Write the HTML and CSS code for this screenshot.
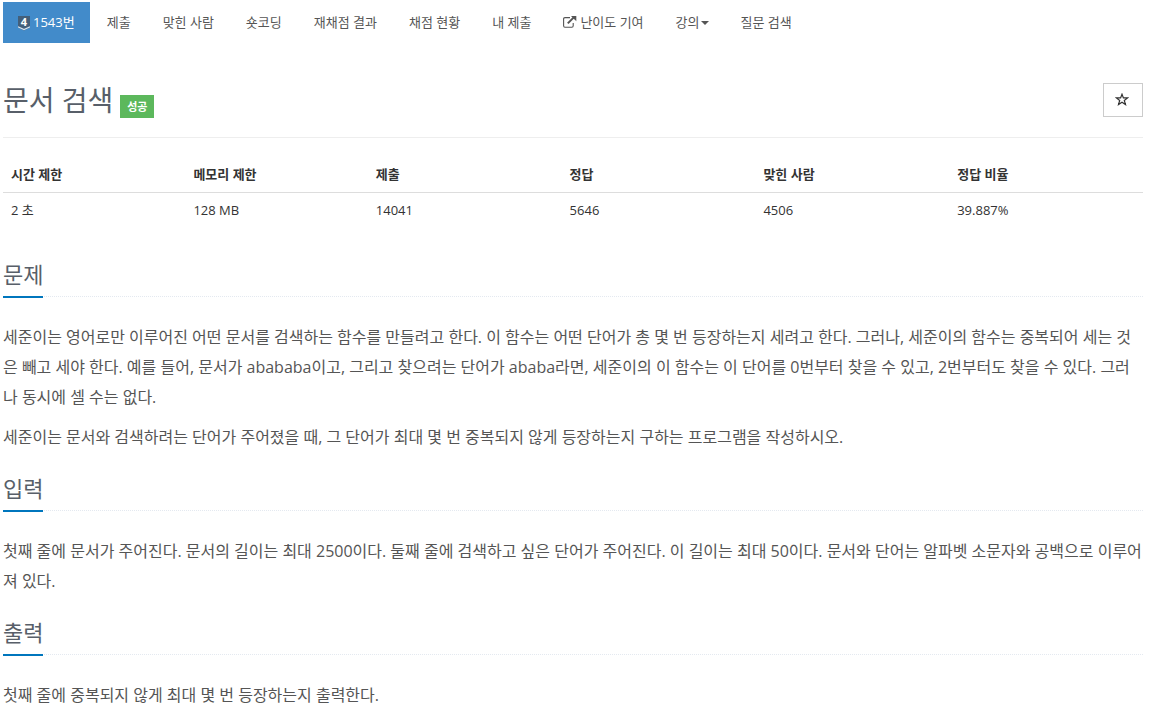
FILE: index.html
```html
<!DOCTYPE html>
<html lang="ko">
<head>
    <meta charset="UTF-8">
    <meta name="viewport" content="width=device-width, initial-scale=1.0">
    <title>1543번: 문서 검색</title>
    <link rel="stylesheet" href="styles.css">
</head>
<body>
<div class="container">
    <ul class="problem-menu">
        <li class="active">
            <a>
                <span class="tier">
                    <svg width="12" height="15" viewBox="0 0 12 15">
                        <path fill="#435f7a" d="M0 0h12v11.5l-6 3-6-3z"/>
                        <path fill="none" stroke="#d5e3ef" stroke-width="1.2" d="M0 10.8l6 2.7 6-2.7"/>
                    </svg>
                    <b>4</b>
                </span>
                1543번
            </a>
        </li>
        <li><a>제출</a></li>
        <li><a>맞힌 사람</a></li>
        <li><a>숏코딩</a></li>
        <li><a>재채점 결과</a></li>
        <li><a>채점 현황</a></li>
        <li><a>내 제출</a></li>
        <li>
            <a>
                <svg class="external" width="14" height="12" viewBox="0 0 14 12">
                    <path fill="none" stroke="#555" stroke-width="1.1" d="M7 1.6H2Q.6 1.6.6 3v6.8q0 1.4 1.4 1.4h6.8q1.4 0 1.4-1.4V7"/>
                    <path fill="none" stroke="#555" stroke-width="2" d="M4.8 7.4l6-6"/>
                    <path fill="#555" d="M8 0h5.3v5.3z"/>
                </svg>
                난이도 기여
            </a>
        </li>
        <li><a>강의<b class="caret"></b></a></li>
        <li><a>질문 검색</a></li>
    </ul>

    <div class="page-header">
        <h1>문서 검색</h1>
        <span class="label-success">성공</span>
        <button class="bookmark">
            <svg width="14" height="14" viewBox="0 0 14 14">
                <path fill="none" stroke="#333" stroke-width="1.2" d="M7 1.2l1.4 3.7h4.2L9.3 7.4l1.2 4.2L7 9.2l-3.5 2.4 1.2-4.2L1.4 4.9h4.2z"/>
            </svg>
        </button>
    </div>

    <table class="info">
        <thead>
        <tr>
            <th class="narrow">시간 제한</th>
            <th class="narrow">메모리 제한</th>
            <th>제출</th>
            <th>정답</th>
            <th>맞힌 사람</th>
            <th>정답 비율</th>
        </tr>
        </thead>
        <tbody>
        <tr>
            <td>2 초</td>
            <td>128 MB</td>
            <td>14041</td>
            <td>5646</td>
            <td>4506</td>
            <td>39.887%</td>
        </tr>
        </tbody>
    </table>

    <section>
        <div class="headline"><h2>문제</h2></div>
        <div class="problem-text">
            <p>세준이는 영어로만 이루어진 어떤 문서를 검색하는 함수를 만들려고 한다. 이 함수는 어떤 단어가 총 몇 번 등장하는지 세려고 한다. 그러나, 세준이의 함수는 중복되어 세는 것은 빼고 세야 한다. 예를 들어, 문서가 abababa이고, 그리고 찾으려는 단어가 ababa라면, 세준이의 이 함수는 이 단어를 0번부터 찾을 수 있고, 2번부터도 찾을 수 있다. 그러나 동시에 셀 수는 없다.</p>
            <p>세준이는 문서와 검색하려는 단어가 주어졌을 때, 그 단어가 최대 몇 번 중복되지 않게 등장하는지 구하는 프로그램을 작성하시오.</p>
        </div>
    </section>

    <section>
        <div class="headline"><h2>입력</h2></div>
        <div class="problem-text">
            <p>첫째 줄에 문서가 주어진다. 문서의 길이는 최대 2500이다. 둘째 줄에 검색하고 싶은 단어가 주어진다. 이 길이는 최대 50이다. 문서와 단어는 알파벳 소문자와 공백으로 이루어져 있다.</p>
        </div>
    </section>

    <section>
        <div class="headline"><h2>출력</h2></div>
        <div class="problem-text">
            <p>첫째 줄에 중복되지 않게 최대 몇 번 등장하는지 출력한다.</p>
        </div>
    </section>
</div>
</body>
</html>
```
FILE: styles.css
```css
* {
    box-sizing: border-box;
}

body {
    margin: 0;
    background: #fff;
    color: #333;
    font-family: "Open Sans", "Noto Sans CJK KR", sans-serif;
    font-size: 13px;
    line-height: 20px;
    overflow: hidden;
}

.container {
    width: 1140px;
    margin-left: 3px;
    padding-top: 2px;
}

.problem-menu {
    display: flex;
    gap: 2px;
    margin: 0;
    padding: 0;
    list-style: none;
}

.problem-menu a {
    display: flex;
    align-items: center;
    height: 41px;
    padding: 0 15px 2px;
    color: #555;
    white-space: nowrap;
}

.problem-menu .active a {
    background: #428bca;
    color: #fff;
}

.tier {
    position: relative;
    width: 12px;
    height: 15px;
    margin: 4px 3px 0 0;
}

.tier svg {
    display: block;
}

/* level number over the badge */
.tier b {
    position: absolute;
    top: 0;
    left: 0;
    width: 12px;
    font-size: 11px;
    line-height: 12px;
    text-align: center;
}

.external {
    margin-right: 3px;
}

.caret {
    margin: 2px 0 0 1px;
    border-top: 4px solid #555;
    border-left: 4px solid transparent;
    border-right: 4px solid transparent;
}

.page-header {
    display: flex;
    align-items: flex-start;
    height: 95px;
    padding-top: 40px;
    border-bottom: 1px solid #eee;
}

h1 {
    margin: 0;
    color: #585f69;
    font-size: 28px;
    font-weight: 400;
    line-height: 34px;
}

.label-success {
    width: 34px;
    height: 23px;
    margin: 12px 0 0 7px;
    background: #5cb85c;
    color: #fff;
    font-size: 11px;
    font-weight: bold;
    line-height: 23px;
    text-align: center;
}

.bookmark {
    display: flex;
    align-items: center;
    justify-content: center;
    width: 40px;
    height: 34px;
    margin-left: auto;
    padding: 0 2px 0 0;
    border: 1px solid #ccc;
    background: #fff;
}

.info {
    width: 100%;
    margin: 19px 0 21px;
    border-collapse: collapse;
    table-layout: fixed;
}

.info th,
.info td {
    height: 35px;
    padding: 0 8px;
    text-align: left;
}

.info th {
    width: 17%;
    border-bottom: 1px solid #ddd;
}

.info .narrow {
    width: 16%;
}

.headline {
    height: 49px;
    margin-bottom: 25px;
    border-bottom: 1px dotted #e4e9f0;
}

.headline h2 {
    display: inline-block;
    height: 50px;
    margin: 0;
    padding-top: 10px;
    border-bottom: 2px solid #0076bd;
    color: #585f69;
    font-size: 22px;
    font-weight: 400;
    line-height: 33px;
}

.problem-text {
    color: #555;
    font-size: 16px;
    line-height: 30px;
}

.problem-text p {
    margin: 0 0 10px;
}
```
